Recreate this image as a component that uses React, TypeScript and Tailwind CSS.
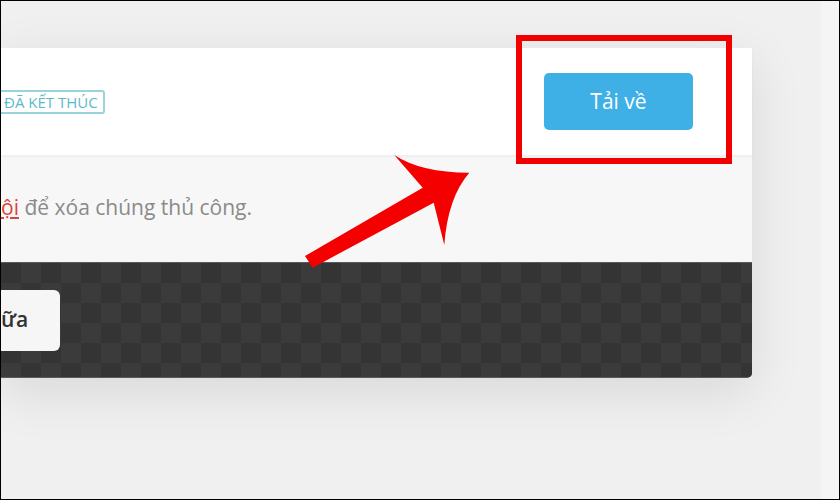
import React from 'react';

const font = { fontFamily: '"Open Sans", "Noto Sans", sans-serif' };

function HeaderRow() {
  return (
    <div className="relative z-10 flex h-[107px] items-center justify-between bg-white pr-[59px] shadow-[0_2px_3px_rgba(0,0,0,0.04)]">
      <span className="-ml-[4px] rounded-[3px] border-2 border-[#9ad4db] px-[5px] py-[1px] text-[15px] leading-[18px] text-[#5db9ca] uppercase">
        Đã kết thúc
      </span>
      <button className="h-[57px] w-[149px] rounded-[5px] bg-[#3eb0e6] text-[21px] text-white">
        Tải về
      </button>
    </div>
  );
}

function NoticeRow() {
  return (
    <div className="flex h-[107px] items-center bg-[#f7f7f7]">
      <p className="-mt-[2px] text-[21px] text-[#8a8a8a]">
        <a className="text-[#d9453d] underline underline-offset-2">ội</a> để xóa chúng thủ công.
      </p>
    </div>
  );
}

function PreviewRow() {
  return (
    <div className="flex h-[116px] items-center rounded-br-[5px] border-y border-[#5a5a5a] bg-[#353535] bg-[conic-gradient(#3b3b3b_25%,#343434_0_50%,#3b3b3b_0_75%,#343434_0)] bg-[length:40px_40px]">
      <button className="h-[61px] w-[59px] rounded-r-[6px] bg-[#f6f6f6] pr-[34px] text-[21px] font-semibold text-[#333]">
        ữa
      </button>
    </div>
  );
}

function Annotation() {
  return (
    <div className="pointer-events-none absolute inset-0 z-20">
      <div className="absolute left-[515px] top-[34px] h-[129px] w-[216px] border-[6px] border-[#f20000]" />
      <svg className="absolute left-0 top-0" width="840" height="500" viewBox="0 0 840 500">
        <path
          d="M304 255 L421.7 186.7 L393.3 154 Q420 171.7 468.3 171.7 Q446.7 196.7 443.3 244 L432.7 201.7 L311.7 266.7 Z"
          fill="#f50000"
        />
      </svg>
    </div>
  );
}

export default function App() {
  return (
    <div
      className="relative h-[500px] w-[840px] overflow-hidden border border-black bg-[#f0f0f0]"
      style={font}
    >
      <div className="flex h-full">
        <div className="flex-1 pt-[47px]">
          <div className="w-[751px] shadow-[0_14px_50px_rgba(0,0,0,0.1)]">
            <HeaderRow />
            <NoticeRow />
            <PreviewRow />
          </div>
        </div>
        <div className="w-[18px] bg-[#f5f5f5]" />
      </div>
      <Annotation />
    </div>
  );
}
